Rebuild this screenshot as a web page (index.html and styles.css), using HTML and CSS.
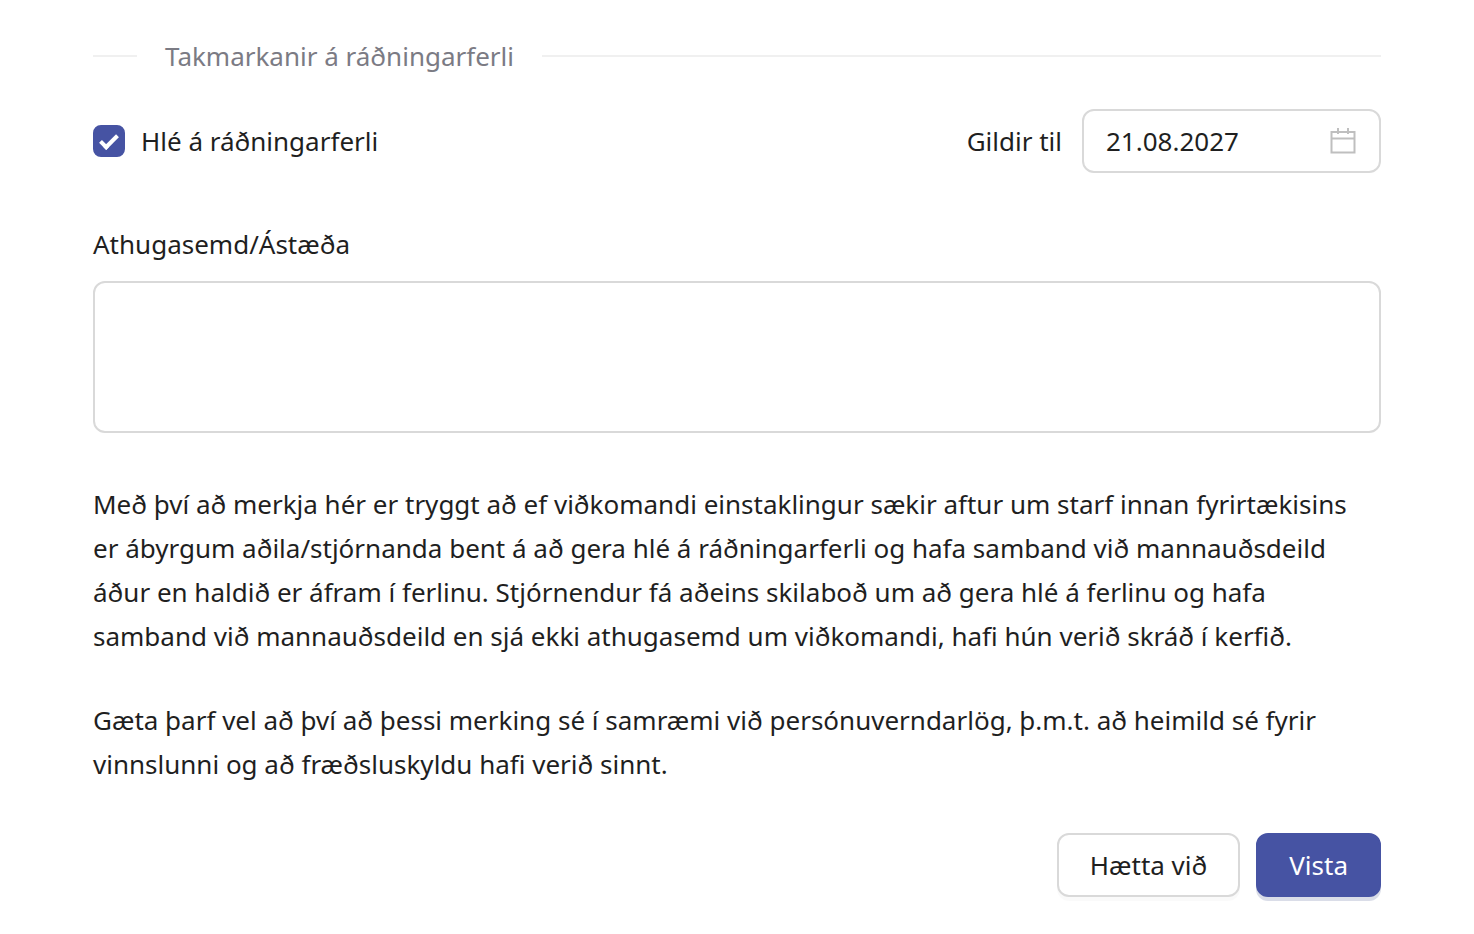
FILE: index.html
```html
<!DOCTYPE html>
<html lang="is">
<head>
<meta charset="utf-8">
<meta name="viewport" content="width=device-width, initial-scale=1">
<title>Takmarkanir á ráðningarferli</title>
<link rel="stylesheet" href="styles.css">
</head>
<body>
<form class="form">
  <h2 class="divider">Takmarkanir á ráðningarferli</h2>
  <div class="options">
    <label class="check"><input class="check-box" type="checkbox" checked><span>Hlé á ráðningarferli</span></label>
    <div class="date">
      <label for="valid-until">Gildir til</label>
      <div class="date-field">
        <input class="date-input" id="valid-until" type="text" value="21.08.2027">
        <svg class="date-icon" viewBox="0 0 28 28" fill="none" stroke="currentColor" stroke-width="2" aria-hidden="true"><path d="M2.5 5h23v20.500h-23zM2 11.500h24M9 1v6M19 1v6"/></svg>
      </div>
    </div>
  </div>
  <label class="note-label" for="note">Athugasemd/Ástæða</label>
  <textarea class="note" id="note"></textarea>
  <p class="text">Með því að merkja hér er tryggt að ef viðkomandi einstaklingur sækir aftur um starf innan fyrirtækisins er ábyrgum aðila/stjórnanda bent á að gera hlé á ráðningarferli og hafa samband við mannauðsdeild áður en haldið er áfram í ferlinu. Stjórnendur fá aðeins skilaboð um að gera hlé á ferlinu og hafa samband við mannauðsdeild en sjá ekki athugasemd um viðkomandi, hafi hún verið skráð í kerfið.</p>
  <p class="text">Gæta þarf vel að því að þessi merking sé í samræmi við persónuverndarlög, þ.m.t. að heimild sé fyrir vinnslunni og að fræðsluskyldu hafi verið sinnt.</p>
  <div class="actions">
    <button class="button" type="button">Hætta við</button>
    <button class="button button-primary" type="submit">Vista</button>
  </div>
</form>
</body>
</html>
```

FILE: styles.css
```css
*, *::before, *::after { box-sizing: border-box; }
body {
  margin: 0;
  background: #fff;
  color: #1f1f1f;
  font: 26px/44px "Noto Sans", sans-serif;
}
.form { padding: 34px 93px 37px; }
.divider {
  display: flex;
  align-items: center;
  gap: 28px;
  margin: 0 0 31px;
  color: #7b7b84;
  font-size: 26px;
  font-weight: 400;
}
.divider::before, .divider::after {
  content: "";
  height: 2px;
  background: #f0f0f0;
}
.divider::before { width: 44px; }
.divider::after { flex: 1; }
.options {
  display: flex;
  justify-content: space-between;
  align-items: center;
  margin-bottom: 49px;
}
.check { display: flex; align-items: center; gap: 16px; }
.check-box {
  appearance: none;
  display: grid;
  place-items: center;
  width: 32px;
  height: 32px;
  margin: 0;
  border-radius: 8px;
  border: 2px solid #d9d9d9;
}
.check-box:checked { background: #4653a3; border-color: #4653a3; }
.check-box:checked::after {
  content: "";
  width: 10px;
  height: 18px;
  border: solid #fff;
  border-width: 0 4px 4px 0;
  transform: translateY(-1px) rotate(45deg);
}
.date { display: flex; align-items: center; gap: 20px; }
.date-field {
  display: flex;
  align-items: center;
  width: 299px;
  height: 64px;
  padding: 0 22px;
  border: 2px solid #d9d9d9;
  border-radius: 12px;
}
.date-input {
  flex: 1;
  min-width: 0;
  padding: 0;
  border: 0;
  outline: 0;
  background: none;
  color: inherit;
  font: inherit;
}
.date-icon { width: 28px; height: 28px; color: #bfbfbf; }
.note-label { display: block; margin-bottom: 15px; }
.note {
  display: block;
  width: 100%;
  height: 152px;
  margin-bottom: 49px;
  padding: 8px 22px;
  border: 2px solid #d9d9d9;
  border-radius: 12px;
  resize: none;
  font: inherit;
}
.text { margin: 0 0 40px; padding-right: 16px; }
.actions { display: flex; justify-content: flex-end; gap: 16px; padding-top: 7px; }
.button {
  height: 64px;
  padding: 0 31px;
  border: 2px solid #d9d9d9;
  border-radius: 12px;
  background: #fff;
  color: inherit;
  font: inherit;
  box-shadow: 0 4px 0 rgba(0, 0, 0, 0.02);
}
.button-primary {
  border-color: #4653a3;
  background: #4653a3;
  color: #fff;
  box-shadow: 0 4px 0 #dadde8;
}
```
